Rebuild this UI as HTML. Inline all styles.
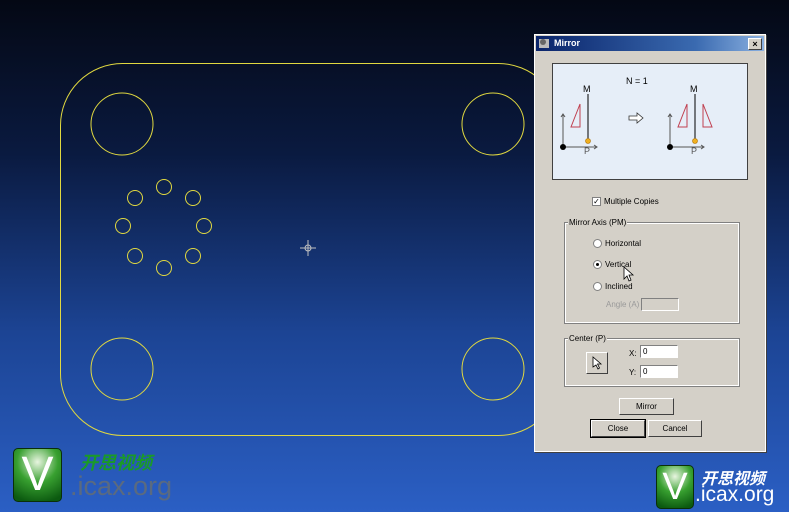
<!DOCTYPE html>
<html><head><style>
body{margin:0;width:789px;height:512px;overflow:hidden;background:linear-gradient(#040814 0%,#0a1a40 30%,#1c4494 65%,#2b5fc4 100%);font-family:"Liberation Sans",sans-serif;position:relative}
.dlg{position:absolute;left:534px;top:34px;width:230px;height:416px;background:#d4d0c8;border:1px solid #fff;box-shadow:1px 1px 0 #404040;font-size:8px;color:#000}
.tb{height:15px;margin:1px;background:linear-gradient(90deg,#0a246a,#3a6ab0 70%,#8ab0e0);color:#fff;font-weight:bold;font-size:9px;line-height:15px;padding-left:18px;position:relative}
.x{position:absolute;right:2px;top:2px;width:12px;height:10px;background:#d4d0c8;border:1px solid #fff;border-right-color:#404040;border-bottom-color:#404040;color:#000;font-size:9px;line-height:10px;text-align:center}
.ab{position:absolute}
.grp{position:absolute;border:1px solid #fff;outline:1px solid #808080;}
.lbl{position:absolute;background:#d4d0c8;padding:0 1px}
.btn{position:absolute;border:1px solid #fff;border-right-color:#404040;border-bottom-color:#404040;background:#d4d0c8;text-align:center;font-size:8px}
.inp{position:absolute;background:#fff;border:1px solid #808080;border-right-color:#fff;border-bottom-color:#fff;font-size:8px;line-height:11px;padding-left:2px}
.rad{position:absolute;width:7px;height:7px;border-radius:50%;background:#fff;border:1px solid #808080}
.logo{position:absolute;width:36px;height:42px;border-radius:5px;background:radial-gradient(circle at 50% 25%,#e8f5e0,#38a030 45%,#0c5a10 90%);border:1px solid #0a3008;color:#fff;font-size:38px;line-height:42px;text-align:center}
</style></head><body>
<svg width="789" height="512" style="position:absolute;left:0;top:0">
<g fill="none" stroke="#e0d840" stroke-width="1">
<rect x="60.5" y="63.5" width="500" height="372" rx="62"/>
<circle cx="122" cy="124" r="31"/><circle cx="493" cy="124" r="31"/>
<circle cx="122" cy="369" r="31"/><circle cx="493" cy="369" r="31"/>
<circle cx="164" cy="187" r="7.5"/><circle cx="193" cy="198" r="7.5"/><circle cx="204" cy="226" r="7.5"/><circle cx="193" cy="256" r="7.5"/><circle cx="164" cy="268" r="7.5"/><circle cx="135" cy="256" r="7.5"/><circle cx="123" cy="226" r="7.5"/><circle cx="135" cy="198" r="7.5"/>
</g>
<g stroke="#c0c0c0" fill="none"><circle cx="308" cy="248" r="3"/><path d="M300 248h16M308 240v16"/></g>
</svg>
<div class="dlg">
<div class="tb">Mirror<div class="x">×</div></div>
<svg class="ab" style="left:2px;top:1px" width="14" height="14"><rect x="2" y="3" width="10" height="9" fill="#bbb"/><circle cx="6" cy="6" r="3" fill="#666"/></svg>
<div class="ab" style="left:17px;top:28px;width:194px;height:115px;background:#e6eef8;border:1px solid #404040">
<svg width="194" height="115" font-size="10" font-family="Liberation Sans">
<text x="73" y="20" font-size="9">N = 1</text>
<text x="30" y="28" font-size="9">M</text><path d="M35 30v46" stroke="#000"/><circle cx="35" cy="77" r="2.5" fill="#f0b020" stroke="#b07000" stroke-width=".6"/><text x="31" y="90" font-size="9" fill="#555">P</text>
<path d="M27 40l-9 23h9z" fill="none" stroke="#c04050"/>
<path d="M10 84v-34M8 53l2-3 2 3M10 83h34M41 81l3 2-3 2" stroke="#555" fill="none"/><circle cx="10" cy="83" r="3" fill="#000"/>
<path d="M76 52h8v-3l6 5-6 5v-3h-8z" fill="#fff" stroke="#333" stroke-width=".8"/>
<text x="137" y="28" font-size="9">M</text><path d="M142 30v46" stroke="#000"/><circle cx="142" cy="77" r="2.5" fill="#f0b020" stroke="#b07000" stroke-width=".6"/><text x="138" y="90" font-size="9" fill="#555">P</text>
<path d="M134 40l-9 23h9zM150 40l9 23h-9z" fill="none" stroke="#c04050"/>
<path d="M117 84v-34M115 53l2-3 2 3M117 83h34M148 81l3 2-3 2" stroke="#555" fill="none"/><circle cx="117" cy="83" r="3" fill="#000"/>
</svg></div>
<div class="ab" style="left:57px;top:162px;width:7px;height:7px;background:#fff;border:1px solid #808080;font-size:8px;line-height:7px;text-align:center">✓</div>
<div class="ab" style="left:69px;top:162px">Multiple Copies</div>
<div class="grp" style="left:30px;top:188px;width:172px;height:98px"></div><div class="lbl" style="left:33px;top:183px">Mirror Axis (PM)</div>
<div class="rad" style="left:58px;top:204px"></div><div class="ab" style="left:70px;top:204px">Horizontal</div>
<div class="rad" style="left:58px;top:225px"><div style="width:3px;height:3px;background:#000;border-radius:50%;margin:2px"></div></div><div class="ab" style="left:70px;top:225px">Vertical</div>
<div class="rad" style="left:58px;top:247px"></div><div class="ab" style="left:70px;top:247px">Inclined</div>
<div class="ab" style="left:71px;top:265px;color:#999">Angle (A)</div><div class="inp" style="left:106px;top:263px;width:34px;height:11px;background:#d4d0c8"></div>
<svg class="ab" style="left:88px;top:231px" width="12" height="16"><path d="M1 1v12l3-3 2 5 2-1-2-5h4z" fill="#fff" stroke="#000" stroke-width=".8"/></svg>
<div class="grp" style="left:30px;top:304px;width:172px;height:45px"></div><div class="lbl" style="left:33px;top:299px">Center (P)</div>
<div class="btn" style="left:51px;top:317px;width:20px;height:20px"><svg width="12" height="14" style="margin-top:3px"><path d="M2 1v10l3-2 2 4 1.5-1-2-4h3.5z" fill="#fff" stroke="#000" stroke-width=".8"/></svg></div>
<div class="ab" style="left:94px;top:314px">X:</div><div class="inp" style="left:105px;top:310px;width:34px;height:11px">0</div>
<div class="ab" style="left:94px;top:333px">Y:</div><div class="inp" style="left:105px;top:330px;width:34px;height:11px">0</div>
<div class="btn" style="left:84px;top:363px;width:53px;height:15px;line-height:15px">Mirror</div>
<div class="btn" style="left:56px;top:385px;width:52px;height:15px;line-height:15px;outline:1px solid #000">Close</div>
<div class="btn" style="left:113px;top:385px;width:52px;height:15px;line-height:15px">Cancel</div>
</div>
<div class="logo" style="left:13px;top:448px;width:47px;height:52px;font-size:48px;line-height:52px">V</div>
<div class="ab" style="left:80px;top:449px;color:#1a9a28;font-size:18px;font-style:italic;font-weight:bold;font-family:'Liberation Sans','Noto Sans CJK SC',sans-serif">开思视频</div>
<div class="ab" style="left:70px;top:471px;color:#5a6a80;font-size:27px">.icax.org</div>
<div class="logo" style="left:656px;top:465px">V</div>
<div class="ab" style="left:701px;top:465px;color:#fff;font-size:16px;font-style:italic;font-weight:bold;font-family:'Liberation Sans','Noto Sans CJK SC',sans-serif">开思视频</div>
<div class="ab" style="left:695px;top:483px;color:#fff;font-size:21px">.icax.org</div>
</body></html>
